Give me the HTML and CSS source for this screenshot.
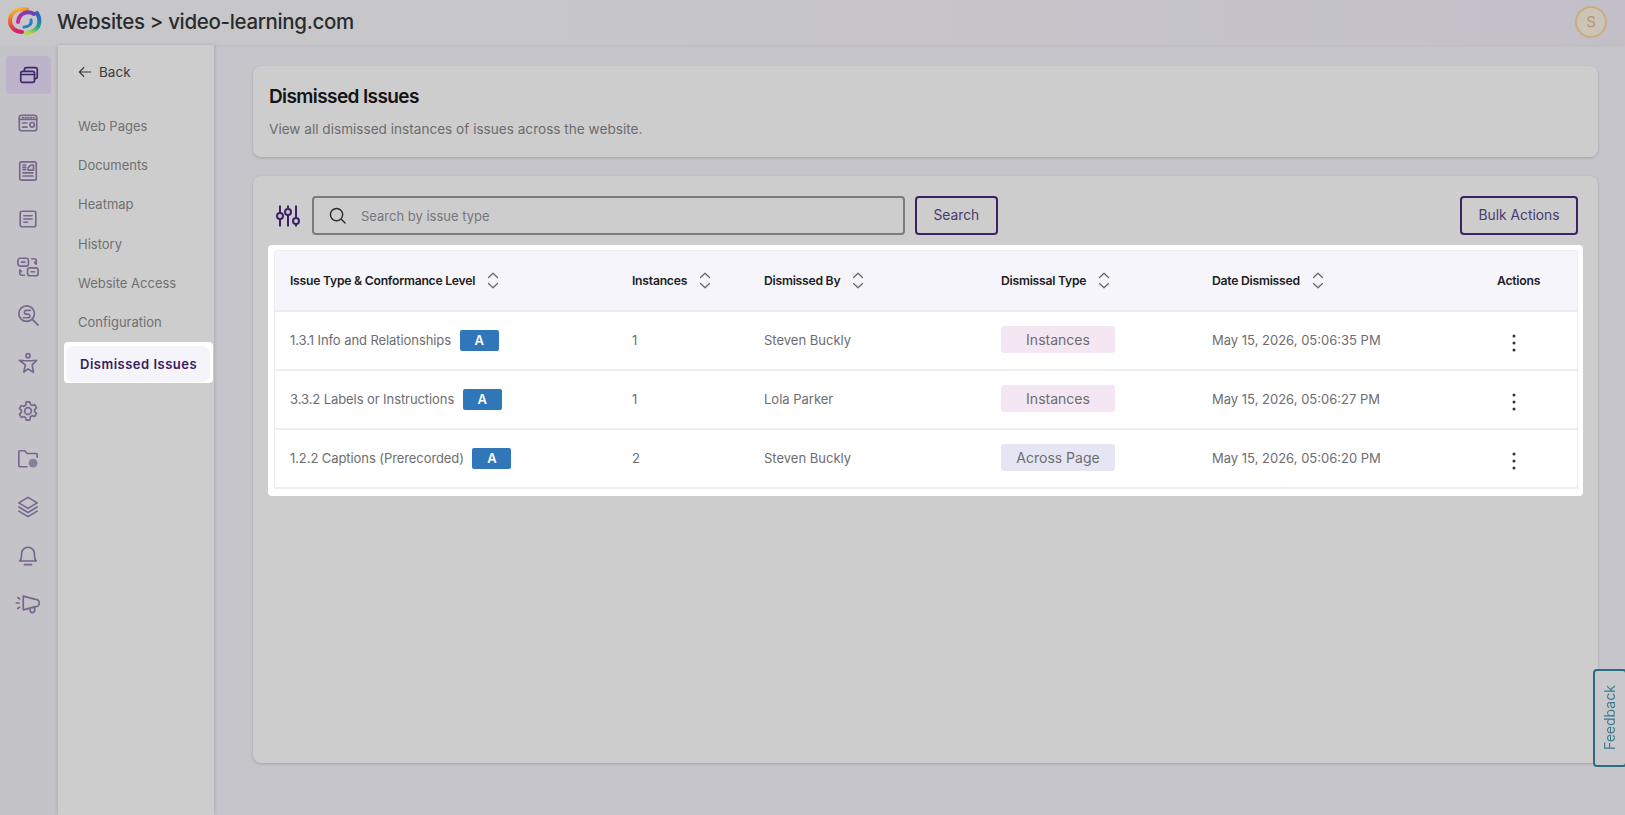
FILE: index.html
```html
<!DOCTYPE html>
<html lang="en">
<head>
    <meta charset="UTF-8">
    <meta name="viewport" content="width=device-width, initial-scale=1.0">
    <title>Dismissed Issues | video-learning.com</title>
    <link rel="stylesheet" href="styles.css">
</head>
<body>
    <svg class="sprites" aria-hidden="true">
        <symbol id="sort" viewBox="0 0 12 17">
            <path d="M1.5 5.5 6 1.2l4.500 4.300M1.500 11.500 6 15.800l4.500-4.300" fill="none" stroke="#666" stroke-width="1.2" stroke-linecap="round" stroke-linejoin="round"/>
        </symbol>
        <symbol id="kebab" viewBox="0 0 4 18">
            <circle cx="2" cy="2" r="1.500"/>
            <circle cx="2" cy="9" r="1.500"/>
            <circle cx="2" cy="16" r="1.500"/>
        </symbol>
    </svg>

    <header class="topbar">
        <svg class="logo" viewBox="8 6 34 31" fill="none" stroke-width="4" stroke-linecap="round">
            <defs>
                <linearGradient id="logoLeft" x1="0" y1="0" x2="0.3" y2="1">
                    <stop offset="0" stop-color="#f4d33a"/>
                    <stop offset="0.45" stop-color="#ef6a2a"/>
                    <stop offset="1" stop-color="#d4206f"/>
                </linearGradient>
                <linearGradient id="logoInner" x1="1" y1="0" x2="0" y2="1">
                    <stop offset="0" stop-color="#6a3fb5"/>
                    <stop offset="1" stop-color="#d3269b"/>
                </linearGradient>
                <linearGradient id="logoRight" x1="0.6" y1="0" x2="0.3" y2="1">
                    <stop offset="0" stop-color="#2f62c4"/>
                    <stop offset="0.55" stop-color="#19a58e"/>
                    <stop offset="1" stop-color="#b5d43a"/>
                </linearGradient>
            </defs>
            <path d="M27 9.500C17 7 10 13 10 21c0 6 5 11 12 11" stroke="url(#logoLeft)"/>
            <path d="M34 14c-6-3.500-15-1.500-16 8" stroke="url(#logoInner)"/>
            <path d="M37 13c4 7 3 15-4 18-3 1.500-5 2-7 2" stroke="url(#logoRight)"/>
            <path d="M31 20c1 4-2 7-7 7" stroke="#2a7dc0" stroke-width="3"/>
        </svg>
        <h1 class="topbar-title">Websites &gt; video-learning.com</h1>
        <div class="avatar">S</div>
    </header>

    <div class="layout">
        <nav class="rail">
            <a class="rail-item active">
                <svg viewBox="0 0 24 24"><rect x="3" y="8" width="15" height="12" rx="2"/><path d="M3 11.500h15M7 8V6a2 2 0 0 1 2-2h10a2 2 0 0 1 2 2v8a2 2 0 0 1-2 2h-1"/></svg>
            </a>
            <a class="rail-item">
                <svg viewBox="0 0 24 24"><rect x="2.500" y="3.500" width="19" height="17" rx="2.500"/><path d="M2.500 8h19M6 6h1M9 6h1M12 6h1M15 6h1M18 6h.500M6 12h5M6 16.500h5"/><circle cx="16.500" cy="14" r="2.500"/></svg>
            </a>
            <a class="rail-item">
                <svg viewBox="0 0 24 24"><rect x="3" y="2" width="18" height="20" rx="2"/><path d="M6.500 5.500h3M6.500 8h3M6.500 10.500h3M6.500 14h11M6.500 17.500h11M12 11V8.500L15 5.500h3v5.500z"/></svg>
            </a>
            <a class="rail-item">
                <svg viewBox="0 0 24 24"><rect x="3.500" y="3.500" width="17" height="17" rx="2"/><path d="M7.500 8.500h9M7.500 12h9M7.500 15.500h4"/></svg>
            </a>
            <a class="rail-item">
                <svg viewBox="0 0 24 24"><rect x="1" y="2.500" width="11.500" height="8.500" rx="2.500"/><rect x="11.500" y="13" width="11.500" height="8.500" rx="2.500"/><path d="M5 6.700h3.500M15.500 17.200H19M16 3h3a2 2 0 0 1 2 2v3.500m-1.800-1.500 1.800 1.800M8 21H5a2 2 0 0 1-2-2v-3.500m1.800 1.500L3 15.200"/></svg>
            </a>
            <a class="rail-item">
                <svg viewBox="0 0 24 24"><circle cx="10.500" cy="10.500" r="8.500"/><path d="m17 17 6 6M14.500 7H10a2 2 0 0 0 0 4h2a2 2 0 0 1 0 4H7"/></svg>
            </a>
            <a class="rail-item">
                <svg viewBox="0 0 24 24"><circle cx="12" cy="4" r="2.200"/><path d="M2.500 9l6 .5h7l6-.5-5 5 1.500 8L12 18.500 7.500 22 9 14z"/></svg>
            </a>
            <a class="rail-item">
                <svg viewBox="0 0 24 24"><path d="M10 2h4l.6 2.800 2 1.100 2.700-.9 2 3.500-2.100 1.900v2.200l2.100 1.900-2 3.500-2.700-.9-2 1.100L14 22h-4l-.6-2.800-2-1.100-2.700.9-2-3.500 2.100-1.900v-2.200L2.700 9.500l2-3.500 2.700.9 2-1.100z"/><circle cx="12" cy="12" r="3.700"/></svg>
            </a>
            <a class="rail-item">
                <svg viewBox="0 0 24 24"><path d="M11 20.500H3.500a1.500 1.500 0 0 1-1.500-1.500V4.500A1.500 1.500 0 0 1 3.500 3h5l2.500 3h9.500A1.500 1.500 0 0 1 22 7.500V10"/><circle cx="17.500" cy="16.500" r="4.800" class="filled"/></svg>
            </a>
            <a class="rail-item">
                <svg viewBox="0 0 24 24"><path d="M12 1.500 22 7.500l-10 6-10-6zM2 12l10 6 10-6M2 16.500l10 6 10-6"/></svg>
            </a>
            <a class="rail-item">
                <svg viewBox="0 0 24 24"><path d="M3 18.500c1.800-1.800 2-4.500 2-8a7 7 0 0 1 14 0c0 3.500.2 6.200 2 8zM8 22.500h8"/></svg>
            </a>
            <a class="rail-item">
                <svg viewBox="0 0 28 24"><path d="M9 4.500 22.500 8a4 4 0 0 1 0 8L9 19.500zM16.500 18v2a2.500 2.500 0 0 0 5 0v-3.500M1.500 12h3M3 6l2 1.500M3 18l2-1.500"/></svg>
            </a>
        </nav>

        <aside class="sidebar">
            <a class="back-link">
                <svg viewBox="0 0 16 14"><path d="M15 7H1.500M7 1.500 1.500 7 7 12.500"/></svg>
                Back
            </a>
            <ul class="side-menu">
                <li>Web Pages</li>
                <li>Documents</li>
                <li>Heatmap</li>
                <li>History</li>
                <li>Website Access</li>
                <li>Configuration</li>
            </ul>
            <div class="side-active"><span>Dismissed Issues</span></div>
        </aside>

        <main class="content">
            <section class="card card-head">
                <h2>Dismissed Issues</h2>
                <p>View all dismissed instances of issues across the website.</p>
            </section>

            <section class="card card-list">
                <div class="toolbar">
                    <svg class="filter-icon" viewBox="0 0 24 24">
                        <path d="M4 1.500v7.500M4 15v7.500M12 1.500v3M12 11v11.500M20 1.500v12M20 20v2.500"/>
                        <circle cx="4" cy="12" r="3"/>
                        <circle cx="12" cy="8" r="3"/>
                        <circle cx="20" cy="17" r="3"/>
                    </svg>
                    <div class="search-box">
                        <svg viewBox="0 0 18 18"><circle cx="8" cy="8" r="6.500"/><path d="m13 13 4 4"/></svg>
                        <span>Search by issue type</span>
                    </div>
                    <button class="btn">Search</button>
                    <button class="btn btn-bulk">Bulk Actions</button>
                </div>

                <div class="table-wrap">
                    <table class="issues">
                        <colgroup>
                            <col class="col-issue">
                            <col class="col-count">
                            <col class="col-by">
                            <col class="col-type">
                            <col class="col-date">
                            <col class="col-actions">
                        </colgroup>
                        <thead>
                            <tr>
                                <th>Issue Type &amp; Conformance Level<svg class="sort"><use href="#sort"/></svg></th>
                                <th>Instances<svg class="sort"><use href="#sort"/></svg></th>
                                <th>Dismissed By<svg class="sort"><use href="#sort"/></svg></th>
                                <th>Dismissal Type<svg class="sort"><use href="#sort"/></svg></th>
                                <th>Date Dismissed<svg class="sort"><use href="#sort"/></svg></th>
                                <th>Actions</th>
                            </tr>
                        </thead>
                        <tbody>
                            <tr>
                                <td class="issue-name">1.3.1 Info and Relationships <span class="level">A</span></td>
                                <td>1</td>
                                <td>Steven Buckly</td>
                                <td><span class="pill">Instances</span></td>
                                <td>May 15, 2026, 05:06:35 PM</td>
                                <td><svg class="kebab"><use href="#kebab"/></svg></td>
                            </tr>
                            <tr>
                                <td class="issue-name">3.3.2 Labels or Instructions <span class="level">A</span></td>
                                <td>1</td>
                                <td>Lola Parker</td>
                                <td><span class="pill">Instances</span></td>
                                <td>May 15, 2026, 05:06:27 PM</td>
                                <td><svg class="kebab"><use href="#kebab"/></svg></td>
                            </tr>
                            <tr>
                                <td class="issue-name">1.2.2 Captions (Prerecorded) <span class="level">A</span></td>
                                <td>2</td>
                                <td>Steven Buckly</td>
                                <td><span class="pill pill-page">Across Page</span></td>
                                <td>May 15, 2026, 05:06:20 PM</td>
                                <td><svg class="kebab"><use href="#kebab"/></svg></td>
                            </tr>
                        </tbody>
                    </table>
                </div>
            </section>
        </main>
    </div>

    <a class="feedback">Feedback</a>
</body>
</html>
```
FILE: styles.css
```css
* {
    margin: 0;
    padding: 0;
    box-sizing: border-box;
    font-family: 'Inter', 'Liberation Sans', sans-serif;
}

body {
    width: 100%;
    height: 100vh;
    overflow: hidden;
    background: #c6c5cb;
    display: flex;
    flex-direction: column;
}

.sprites {
    display: none;
}

/* Top bar */
.topbar {
    height: 45px;
    flex-shrink: 0;
    display: flex;
    align-items: center;
    padding: 0 18px 2px 8px;
    background: linear-gradient(90deg, #c7c7c9, #c6c4ca 70%, #c3bfc9);
    box-shadow: 0 1px 3px rgba(0, 0, 0, 0.06);
}

.logo {
    width: 34px;
    height: 31px;
    margin-right: 15px;
}

.topbar-title {
    font-size: 20.500px;
    font-weight: 500;
    letter-spacing: -0.34px;
    color: #2b2b2e;
}

.avatar {
    margin-left: auto;
    width: 32px;
    height: 32px;
    border-radius: 50%;
    border: 2px solid #c8ad7c;
    background: #cdc4b8;
    color: #b0986c;
    font-size: 15px;
    display: flex;
    align-items: center;
    justify-content: center;
}

/* Layout */
.layout {
    flex: 1;
    display: flex;
    min-height: 0;
}

.rail {
    width: 58px;
    flex-shrink: 0;
    padding-top: 6px;
    background: #c3c3c8;
    display: flex;
    flex-direction: column;
}

.rail-item {
    height: 48px;
    flex-shrink: 0;
    display: flex;
    align-items: center;
    justify-content: center;
    padding-right: 3px;
}

.rail-item svg {
    height: 22px;
    width: auto;
    fill: none;
    stroke: #75678d;
    stroke-width: 1.800;
    stroke-linecap: round;
    stroke-linejoin: round;
}

.rail-item svg .filled {
    fill: #8a7da0;
    stroke: none;
}

.rail-item.active {
    height: 38px;
    width: 45px;
    margin: 5px 0 5px 6px;
    padding-right: 0;
    border-radius: 4px;
    background: #bdb3cb;
}

.rail-item.active svg {
    stroke: #40296a;
}

.sidebar {
    width: 156px;
    flex-shrink: 0;
    background: #cdcdcd;
    box-shadow: -2px 0 3px rgba(0, 0, 0, 0.05), 1px 0 3px rgba(0, 0, 0, 0.12);
    padding-top: 19px;
}

.back-link {
    display: flex;
    align-items: center;
    gap: 7px;
    padding-left: 20px;
    height: 16px;
    font-size: 13.500px;
    color: #3b3b3e;
}

.back-link svg {
    width: 14px;
    height: 12px;
    fill: none;
    stroke: #3b3b3e;
    stroke-width: 1.400;
}

.side-menu {
    list-style: none;
    margin-top: 27px;
    padding-left: 20px;
}

.side-menu li {
    height: 39.200px;
    line-height: 39.200px;
    font-size: 13px;
    color: #707072;
}

.side-active {
    margin: -0.400px 0 0 6px;
    width: 149px;
    height: 41px;
    padding: 4px 3px 1px 2px;
    background: #fff;
    border-radius: 4px;
}

.side-active span {
    display: block;
    height: 36px;
    line-height: 36px;
    padding-left: 14px;
    border-radius: 8px;
    background: #f5f4fb;
    color: #35205f;
    font-size: 13px;
    font-weight: 600;
    letter-spacing: 0.5px;
}

/* Content */
.content {
    flex: 1;
    padding: 21px 27px 52px 39px;
    display: flex;
    flex-direction: column;
    gap: 19px;
}

.card {
    background: #cdcdcd;
    border-radius: 8px;
    box-shadow: 0 1px 3px rgba(0, 0, 0, 0.18);
}

.card-head {
    height: 91px;
    padding: 18px 16px 0;
}

.card-head h2 {
    font-size: 19px;
    font-weight: 600;
    letter-spacing: -0.6px;
    line-height: 26px;
    color: #141414;
}

.card-head p {
    margin-top: 11px;
    font-size: 13.600px;
    color: #6c6c6e;
}

.card-list {
    flex: 1;
    padding: 20px 15px;
}

.toolbar {
    display: flex;
    align-items: center;
    height: 39px;
    margin: 0 5px 10px 8px;
}

.filter-icon {
    width: 24px;
    height: 24px;
    margin-right: 12px;
    fill: none;
    stroke: #3a2268;
    stroke-width: 2;
}

.search-box {
    width: 593px;
    height: 39px;
    display: flex;
    align-items: center;
    gap: 15px;
    padding-left: 15px;
    border: 2px solid #7b7b7b;
    border-radius: 4px;
    font-size: 13px;
    color: #77777a;
}

.search-box svg {
    width: 17px;
    height: 17px;
    fill: none;
    stroke: #2d2d2d;
    stroke-width: 1.500;
    stroke-linecap: round;
}

.btn {
    height: 39px;
    margin-left: 10px;
    padding: 0 16.500px 2px;
    background: transparent;
    border: 2px solid #3a2268;
    border-radius: 4px;
    font-size: 13.800px;
    color: #4a3b6e;
}

.btn-bulk {
    margin-left: auto;
}

/* Table */
.table-wrap {
    background: #fff;
    border-radius: 4px;
    padding: 5px 5px 7px 6px;
}

.issues {
    width: 100%;
    border-collapse: separate;
    border-spacing: 0;
    table-layout: fixed;
    border: 1px solid #ececf0;
    border-width: 1px 1px 0 1px;
    border-radius: 3px 3px 0 0;
}

.col-issue { width: 342px; }
.col-count { width: 132px; }
.col-by { width: 237px; }
.col-type { width: 211px; }
.col-date { width: 285px; }

.issues th {
    height: 61px;
    padding-left: 15px;
    background: #f6f5fb;
    border-bottom: 2px solid #ececf0;
    text-align: left;
    font-size: 12.200px;
    font-weight: 600;
    letter-spacing: -0.25px;
    color: #1c1c1f;
}

.issues td {
    height: 59px;
    padding: 0 0 2px 15px;
    border-bottom: 2px solid #eeeef0;
    font-size: 13px;
    color: #6d6d70;
}

.issues .issue-name {
    padding-bottom: 0;
    letter-spacing: -0.08px;
}

.sort {
    width: 12px;
    height: 17px;
    margin-left: 12px;
    vertical-align: -4px;
}

.level {
    display: inline-block;
    width: 39px;
    height: 21px;
    line-height: 21px;
    margin-left: 5px;
    border-radius: 2px;
    background: #2f77b8;
    color: #fff;
    text-align: center;
    font-size: 13px;
    font-weight: 600;
}

.pill {
    display: block;
    width: 114px;
    height: 27px;
    line-height: 27px;
    border-radius: 3px;
    background: #f5e6f3;
    text-align: center;
    font-size: 14px;
}

.pill-page {
    background: #e6e5f4;
}

.kebab {
    display: block;
    width: 4px;
    height: 18px;
    margin: 6px 0 0 15px;
    fill: #333;
}

/* Feedback tab over the page edge */
.feedback {
    position: fixed;
    right: -2px;
    top: 669px;
    width: 34px;
    height: 98px;
    display: flex;
    align-items: center;
    justify-content: center;
    border: 2px solid #2c6e80;
    border-radius: 4px;
    background: #c9c9cd;
    color: #3f7d8e;
    font-size: 14px;
    writing-mode: vertical-rl;
    transform: rotate(180deg);
}
```
